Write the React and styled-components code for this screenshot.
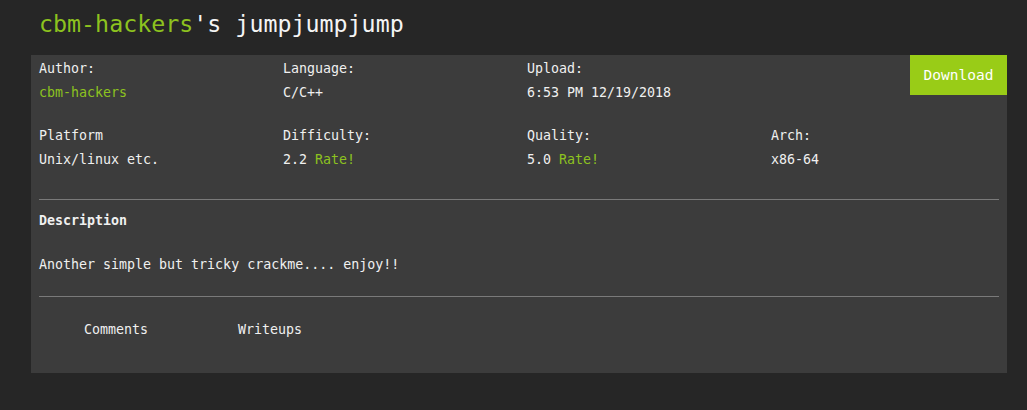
import React from 'react'
import styled, { createGlobalStyle } from 'styled-components'

const GlobalStyle = createGlobalStyle`
  body {
    margin: 0;
    background: #262626;
    font-family: "DejaVu Sans Mono", "Liberation Mono", monospace;
    color: #f0f0f0;
  }
`

const Page = styled.div`
  width: 1027px;
  height: 410px;
  padding: 0 21px 0 31px;
  box-sizing: border-box;
`

const Title = styled.h1`
  margin: 0;
  padding: 8px 0 0 8px;
  height: 55px;
  box-sizing: border-box;
  font-size: 23.3px;
  font-weight: normal;
  line-height: 32px;
  color: #f4f4f4;
`

const Green = styled.span`
  color: #8dc21f;
`

const Panel = styled.div`
  background: #3c3c3c;
  width: 976px;
  padding-bottom: 31px;
  font-size: 13.3px;
  line-height: 24px;
`

const InfoRow = styled.div`
  display: grid;
  grid-template-columns: repeat(4, 1fr);
  margin-bottom: ${p => p.$gap || 0}px;
`

const Field = styled.div`
  padding: 2px 0 0 8px;
`

const Label = styled.div``

const Value = styled.div`
  color: ${p => (p.$accent ? '#8dc21f' : '#f0f0f0')};
`

const DownloadCell = styled.div`
  display: flex;
  justify-content: flex-end;
  align-items: flex-start;
`

const DownloadButton = styled.button`
  background: #99cc17;
  color: #ffffff;
  border: none;
  width: 97px;
  height: 40px;
  font-family: inherit;
  font-size: 14.5px;
  cursor: pointer;
  padding: 0;
`

const Divider = styled.hr`
  border: none;
  border-top: 1px solid #7a7a7a;
  margin: 0 8px;
`

const Section = styled.div`
  padding: ${p => p.$pad};
`

const Heading = styled.div`
  font-weight: bold;
`

const Tabs = styled.div`
  display: flex;
  padding: 21px 8px 0;
`

const Tab = styled.div`
  padding: 0 45px;
  color: #f0f0f0;
`

export default function App() {
  return (
    <Page>
      <GlobalStyle />
      <Title>
        <Green>cbm-hackers</Green>'s jumpjumpjump
      </Title>
      <Panel>
        <InfoRow $gap={17}>
          <Field>
            <Label>Author:</Label>
            <Value $accent>cbm-hackers</Value>
          </Field>
          <Field>
            <Label>Language:</Label>
            <Value>C/C++</Value>
          </Field>
          <Field>
            <Label>Upload:</Label>
            <Value>6:53 PM 12/19/2018</Value>
          </Field>
          <DownloadCell>
            <DownloadButton>Download</DownloadButton>
          </DownloadCell>
        </InfoRow>
        <InfoRow $gap={27}>
          <Field>
            <Label>Platform</Label>
            <Value>Unix/linux etc.</Value>
          </Field>
          <Field>
            <Label>Difficulty:</Label>
            <Value>2.2 <Green>Rate!</Green></Value>
          </Field>
          <Field>
            <Label>Quality:</Label>
            <Value>5.0 <Green>Rate!</Green></Value>
          </Field>
          <Field>
            <Label>Arch:</Label>
            <Value>x86-64</Value>
          </Field>
        </InfoRow>
        <Divider />
        <Section $pad="9px 8px 0">
          <Heading>Description</Heading>
        </Section>
        <Section $pad="20px 8px 19px">
          Another simple but tricky crackme.... enjoy!!
        </Section>
        <Divider />
        <Tabs>
          <Tab>Comments</Tab>
          <Tab>Writeups</Tab>
        </Tabs>
      </Panel>
    </Page>
  )
}
